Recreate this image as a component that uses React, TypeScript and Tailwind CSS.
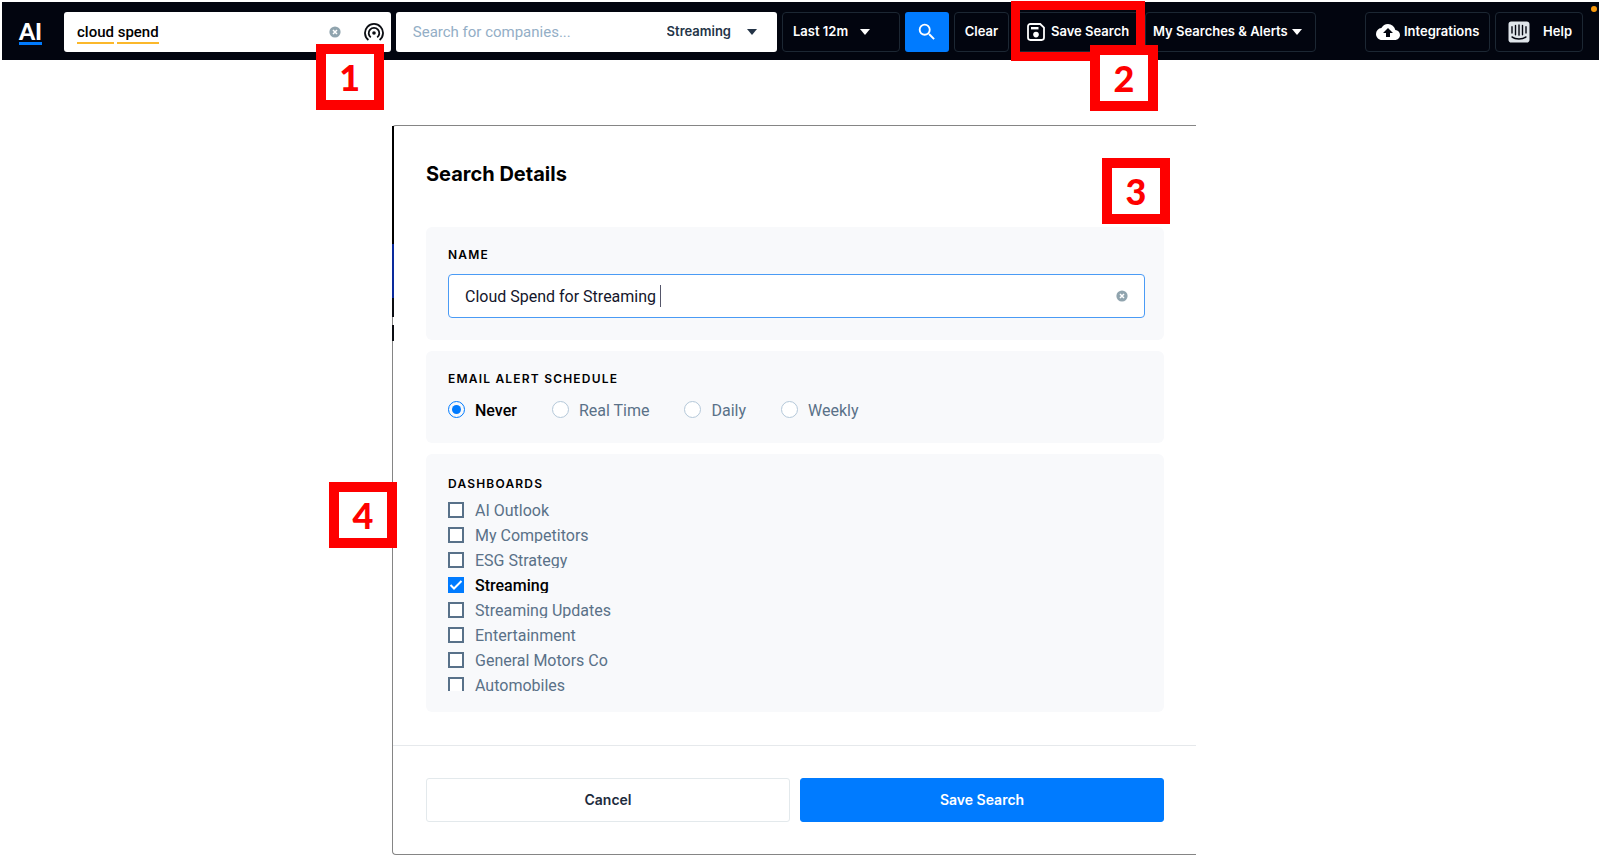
import { useState } from "react";
import type { ReactNode } from "react";
import { FaIntercom } from "react-icons/fa";
import { MdCloudUpload, MdSearch } from "react-icons/md";

const schedules = ["Never", "Real Time", "Daily", "Weekly"];

const dashboards = [
  "AI Outlook",
  "My Competitors",
  "ESG Strategy",
  "Streaming",
  "Streaming Updates",
  "Entertainment",
  "General Motors Co",
  "Automobiles",
];

function Caret({ className }: { className?: string }) {
  return (
    <svg viewBox="0 0 10 6" className={`h-1.5 w-2.5 shrink-0 ${className ?? ""}`} fill="currentColor" aria-hidden>
      <path d="M0 0h10L5 6z" />
    </svg>
  );
}

function ClearIcon() {
  return (
    <svg viewBox="0 0 12 12" className="size-3" aria-hidden>
      <circle cx="6" cy="6" r="5.6" fill="#90a4ae" />
      <path d="M4 4l4 4M8 4L4 8" stroke="#fff" strokeWidth="1.5" />
    </svg>
  );
}

function BroadcastIcon() {
  return (
    <svg viewBox="0 0 20 20" className="size-5" fill="none" stroke="#0b0d12" strokeWidth="1.8" aria-hidden>
      <path d="M4.4 18a9 9 0 1 1 11.2 0" />
      <path d="M6.8 15.4a5.3 5.3 0 1 1 6.4 0" />
      <circle cx="10" cy="11" r="1.8" fill="#0b0d12" stroke="none" />
    </svg>
  );
}

function DiskIcon() {
  return (
    <svg viewBox="0 0 18 18" className="size-[18px] shrink-0" fill="none" stroke="currentColor" strokeWidth="1.8" aria-hidden>
      <path d="M3.4 1h9.800L17 4.600v10a2.400 2.400 0 0 1-2.400 2.400H3.400A2.400 2.400 0 0 1 1 14.600V3.400A2.400 2.400 0 0 1 3.400 1z" />
      <path d="M4 5.200h7.500" strokeWidth="2.400" />
      <circle cx="9" cy="11.600" r="2.800" fill="currentColor" stroke="none" />
    </svg>
  );
}

function StepBadge({ step, className }: { step: number; className: string }) {
  return (
    <div
      className={`absolute z-10 flex h-[66px] w-[68px] items-center justify-center border-[10px] border-[#fe0000] bg-white font-[Lato,sans-serif] text-4xl font-black text-[#fe0000] ${className}`}
    >
      {step}
    </div>
  );
}

function Section({ title, className, children }: { title: string; className: string; children: ReactNode }) {
  return (
    <fieldset className={`rounded-md bg-[#f8f9fb] pr-[19px] pl-[22px] ${className}`}>
      <legend className="float-left w-full text-xs leading-4 font-semibold tracking-widest text-black uppercase">
        {title}
      </legend>
      <div className="clear-both">{children}</div>
    </fieldset>
  );
}

const barButton =
  "flex h-10 shrink-0 items-center rounded-[4px] border border-[#1c2733] text-[13px] font-semibold text-white";

function TopBar() {
  const [query, setQuery] = useState("cloud spend");

  return (
    <header className="mt-0.5 mr-px ml-0.5 flex gap-[5px] bg-[#02050f] pt-2.5 pr-4 pb-2">
      <a href="#" aria-label="AI home" className="flex w-[57px] shrink-0 justify-center pt-[5px] text-white">
        <span className="h-[28px] border-b-[3px] border-[#007bff] font-[Lato,sans-serif] text-[23px] leading-7 font-black">
          AI
        </span>
      </a>

      <div className="relative flex h-10 min-w-0 flex-[6] items-center rounded-[3px] bg-white">
        <div className="relative ml-[13px]">
          <input
            aria-label="Search documents"
            value={query}
            onChange={(e) => setQuery(e.target.value)}
            className="block [field-sizing:content] font-[Roboto,sans-serif] text-[15px] leading-6 font-medium text-black outline-none"
          />
          <div className="pointer-events-none absolute inset-x-0 top-[22px] flex gap-[3px]">
            <span className="h-0.5 flex-[10] bg-[#fbb82b]" />
            <span className="h-0.5 flex-[11] bg-[#fbb82b]" />
          </div>
        </div>
        <button aria-label="Clear query" className="mr-[23px] ml-auto" onClick={() => setQuery("")}>
          <ClearIcon />
        </button>
        <button aria-label="Smart synonyms" className="mr-[7px]">
          <BroadcastIcon />
        </button>
        <StepBadge step={1} className="top-8 right-[7px]" />
      </div>

      <div className="flex h-10 min-w-0 flex-[7] items-center rounded-[3px] bg-white">
        <input
          aria-label="Companies"
          placeholder="Search for companies..."
          className="ml-[17px] min-w-0 flex-1 font-[Roboto,sans-serif] text-[15px] outline-none placeholder:text-[#93aec6]"
        />
        <select
          aria-label="Watchlist"
          className="appearance-none [field-sizing:content] text-[13px] font-semibold text-[#243447] outline-none"
        >
          <option>Streaming</option>
        </select>
        <Caret className="mr-5 ml-4 text-[#243447]" />
      </div>

      <div className={`${barButton} w-[118px] pl-2.5`}>
        <select aria-label="Date range" className="appearance-none [field-sizing:content] outline-none">
          <option>Last 12m</option>
        </select>
        <Caret className="ml-3" />
      </div>
      <button
        aria-label="Search"
        className="flex h-10 w-11 shrink-0 items-center justify-center rounded-[3px] bg-[#007bff] text-white"
      >
        <MdSearch className="size-[22px]" />
      </button>
      <button className={`${barButton} w-[55px] justify-center`}>Clear</button>

      <div className="relative shrink-0">
        <button className={`${barButton} w-[126px] gap-1.5 pl-3 whitespace-nowrap`}>
          <DiskIcon />
          Save Search
        </button>
        <div className="pointer-events-none absolute -top-[11px] -right-[5px] -bottom-[9px] -left-[3px] border-[9px] border-[#fe0000]" />
        <StepBadge step={2} className="top-[33px] left-[76px]" />
      </div>
      <button className={`${barButton} mr-11 w-[171px] gap-1 pl-[7px] whitespace-nowrap`}>
        My Searches & Alerts
        <Caret />
      </button>

      <button className={`${barButton} w-[125px] gap-1 pl-2.5`}>
        <MdCloudUpload className="size-6" />
        Integrations
      </button>
      <button className={`${barButton} relative w-[88px] justify-between pr-2.5 pl-[11px]`}>
        <FaIntercom className="size-6 text-[#dfe5ea]" />
        Help
        <span className="absolute -top-[7px] -right-[15px] size-1.5 rounded-full bg-[#f99a0c]" />
      </button>
    </header>
  );
}

function SearchDetails() {
  const [name, setName] = useState("Cloud Spend for Streaming ");
  const [schedule, setSchedule] = useState("Never");
  const [selected, setSelected] = useState(["Streaming"]);

  const toggle = (item: string) =>
    setSelected((prev) => (prev.includes(item) ? prev.filter((d) => d !== item) : [...prev, item]));

  return (
    <section className="relative w-full max-w-[804px] rounded-l-[4px] border-y border-l border-[#858585] bg-white">
      {/* slice of the page behind the dialog */}
      <div className="absolute top-0 -left-px flex w-0.5 flex-col">
        <span className="h-[118px] bg-black" />
        <span className="h-[54px] bg-[#0a2a9c]" />
        <span className="h-[19px] bg-[#0b0d12]" />
        <span className="mt-2 h-4 bg-[#0b0d12]" />
      </div>
      <StepBadge step={3} className="top-8 right-[26px]" />
      <StepBadge step={4} className="top-[356px] -left-16" />

      <div className="pt-[34px] pr-8 pb-[33px] pl-[33px]">
        <h1 className="mb-[39px] text-xl leading-7 font-bold text-black">Search Details</h1>

        <div className="space-y-[11px]">
          <Section title="Name" className="pt-5 pb-[22px]">
            <div className="pt-[11px]">
              <div className="flex h-11 items-center rounded-[4px] border border-[#4a9bf5] bg-white px-4">
                <input
                  aria-label="Name"
                  value={name}
                  onChange={(e) => setName(e.target.value)}
                  className="[field-sizing:content] pt-0.5 font-[Roboto,sans-serif] text-base text-[#14162b] outline-none"
                />
                <span className="h-[22px] w-px bg-[#55566a]" />
                <button aria-label="Clear name" className="ml-auto" onClick={() => setName("")}>
                  <ClearIcon />
                </button>
              </div>
            </div>
          </Section>

          <Section title="Email alert schedule" className="pt-5 pb-[22px]">
            <div className="flex gap-[35px] pt-3.5">
              {schedules.map((item) => (
                <label
                  key={item}
                  className="flex items-start gap-2.5 font-[Roboto,sans-serif] text-base leading-5 text-[#5a7188] has-checked:font-medium has-checked:text-black"
                >
                  <input
                    type="radio"
                    name="schedule"
                    checked={schedule === item}
                    onChange={() => setSchedule(item)}
                    className="size-[17px] appearance-none rounded-full border border-[#b4c8d9] bg-white p-[3px] checked:border-[#007bff] checked:bg-[#007bff] checked:bg-clip-content"
                  />
                  {item}
                </label>
              ))}
            </div>
          </Section>

          <Section title="Dashboards" className="pt-[22px] pb-[21px]">
            <ul className="h-[199px] space-y-[9px] overflow-hidden pt-2.5">
              {dashboards.map((item) => (
                <li key={item} className="h-4 overflow-hidden">
                  <label className="flex items-start gap-[11px] font-[Roboto,sans-serif] text-base leading-[17px] text-[#5a7188] has-checked:font-medium has-checked:text-black">
                    <span className="relative size-4">
                      <input
                        type="checkbox"
                        checked={selected.includes(item)}
                        onChange={() => toggle(item)}
                        className="block size-4 appearance-none border-2 border-[#587189] bg-white checked:border-[#007bff] checked:bg-[#007bff]"
                      />
                      {selected.includes(item) && (
                        <svg
                          viewBox="0 0 16 16"
                          className="pointer-events-none absolute inset-0"
                          fill="none"
                          stroke="#fff"
                          strokeWidth="2"
                        >
                          <path d="M2.500 8l3.500 3.500L13.500 4" />
                        </svg>
                      )}
                    </span>
                    {item}
                  </label>
                </li>
              ))}
            </ul>
          </Section>
        </div>
      </div>

      <footer className="flex gap-2.5 border-t border-[#e6e9ec] py-8 pr-8 pl-[33px] text-sm font-semibold">
        <button className="h-11 flex-1 rounded-[3px] border border-[#e3e9ec] text-[#1d2b3d]">Cancel</button>
        <button className="h-11 flex-1 rounded-[3px] border border-[#007bff] bg-[#007bff] text-white">
          Save Search
        </button>
      </footer>
    </section>
  );
}

export default function App() {
  return (
    <div className="flow-root bg-white font-[Inter,sans-serif]">
      <TopBar />
      <main className="flex justify-center pt-[65px] pr-3">
        <SearchDetails />
      </main>
    </div>
  );
}
